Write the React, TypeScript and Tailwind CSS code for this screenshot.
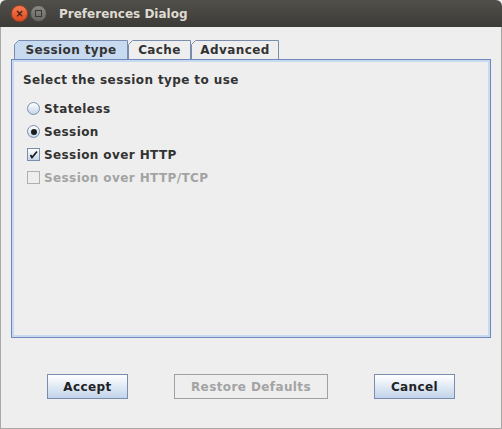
import React from "react";

const font = { fontFamily: '"DejaVu Sans", "Liberation Sans", sans-serif' };

// Ocean-look tab with a clipped top-left corner
const Tab = ({ label, selected, width }: { label: string; selected?: boolean; width: number }) => (
  <div className="relative h-[19px]" style={{ width }}>
    <svg className="absolute inset-0" width={width} height={19}>
      <path
        d={`M0.5 19 L0.5 4.5 L4.5 0.5 L${width - 0.5} 0.5 L${width - 0.5} 19`}
        fill={selected ? "#c8daef" : "#eeeeee"}
        stroke="#7b8dae"
      />
    </svg>
    <span className="relative flex h-full items-center justify-center pt-[1px] text-[12px] font-bold tracking-[0.4px] text-[#333333]">
      {label}
    </span>
  </div>
);

const Radio = ({ checked }: { checked?: boolean }) => (
  <span className="flex h-[13px] w-[13px] items-center justify-center rounded-full border border-[#7b8dae] bg-gradient-to-b from-white to-[#c5d6ea]">
    {checked && <span className="h-[6px] w-[6px] rounded-full bg-[#1e1e1e]" />}
  </span>
);

const Check = ({ checked, disabled }: { checked?: boolean; disabled?: boolean }) => (
  <span
    className={`flex h-[13px] w-[13px] items-center justify-center border ${
      disabled ? "border-[#b0b0b0] bg-[#eeeeee]" : "border-[#7b8dae] bg-gradient-to-b from-white to-[#c5d6ea]"
    }`}
  >
    {checked && (
      <svg width="9" height="9" viewBox="0 0 9 9">
        <path d="M1.5 5 L3 7.5 L8 1.5" fill="none" stroke="#1e1e1e" strokeWidth="1.8" />
      </svg>
    )}
  </span>
);

const Row = ({ children, label, disabled }: { children: React.ReactNode; label: string; disabled?: boolean }) => (
  <div className="flex h-[23px] items-center gap-[4px] pl-[4px]">
    {children}
    <span className={`text-[12px] font-bold tracking-[0.4px] ${disabled ? "text-[#a3a3a3]" : "text-[#333333]"}`}>
      {label}
    </span>
  </div>
);

const Btn = ({ label, width, disabled }: { label: string; width: number; disabled?: boolean }) => (
  <button
    className={`flex h-[25px] items-center justify-center border text-[12px] font-bold tracking-[0.4px] ${
      disabled
        ? "border-[#a0a0a0] bg-[#eeeeee] text-[#a3a3a3]"
        : "border-[#7b8dae] bg-gradient-to-b from-white to-[#c2d4ea] text-[#222222]"
    }`}
    style={{ width }}
  >
    {label}
  </button>
);

export default function App() {
  return (
    <div className="flex h-[429px] w-[502px] flex-col overflow-hidden bg-[#eeeeee]" style={font}>
      {/* Title bar */}
      <div className="flex h-[27px] shrink-0 items-center rounded-tl-[6px] rounded-tr-[6px] bg-gradient-to-b from-[#514f4a] to-[#3c3b37] pl-[11px]">
        <span className="flex h-[17px] w-[17px] items-center justify-center rounded-full border border-[#a9401e] bg-gradient-to-b from-[#f47a52] to-[#df4a1e] text-[10px] font-bold leading-none text-[#3b1d10]">
          ×
        </span>
        <span className="ml-[2px] flex h-[17px] w-[17px] items-center justify-center rounded-full border border-[#4a4844] bg-gradient-to-b from-[#8a8883] to-[#6a6863]">
          <span className="h-[7px] w-[7px] border border-[#3a3936]" />
        </span>
        <span className="ml-[12px] text-[12px] font-bold text-[#dfdbd2]">Preferences Dialog</span>
      </div>

      <div className="flex flex-1 flex-col border-x border-b border-[#a9a8a4]">
        {/* Tabs */}
        <div className="mt-[13px] flex pl-[13px]">
          <Tab label="Session type" selected width={114} />
          <Tab label="Cache" width={63} />
          <Tab label="Advanced" width={88} />
        </div>

        {/* Panel */}
        <div className="mx-[10px] h-[279px] border border-[#6f87ba] pl-[11px] pt-[11px] shadow-[inset_0_2px_0_#c8daef,inset_2px_0_0_#c8daef,inset_-2px_0_0_#c8daef,inset_0_-2px_0_#c8daef]">
          <div className="mb-[11px] h-[15px] text-[12px] font-bold tracking-[0.4px] text-[#333333]">
            Select the session type to use
          </div>
          <Row label="Stateless">
            <Radio />
          </Row>
          <Row label="Session">
            <Radio checked />
          </Row>
          <Row label="Session over HTTP">
            <Check checked />
          </Row>
          <Row label="Session over HTTP/TCP" disabled>
            <Check disabled />
          </Row>
        </div>

        {/* Buttons */}
        <div className="mt-[36px] flex pl-[46px]">
          <Btn label="Accept" width={81} />
          <div className="ml-[46px]">
            <Btn label="Restore Defaults" width={154} disabled />
          </div>
          <div className="ml-[46px]">
            <Btn label="Cancel" width={81} />
          </div>
        </div>
      </div>
    </div>
  );
}
